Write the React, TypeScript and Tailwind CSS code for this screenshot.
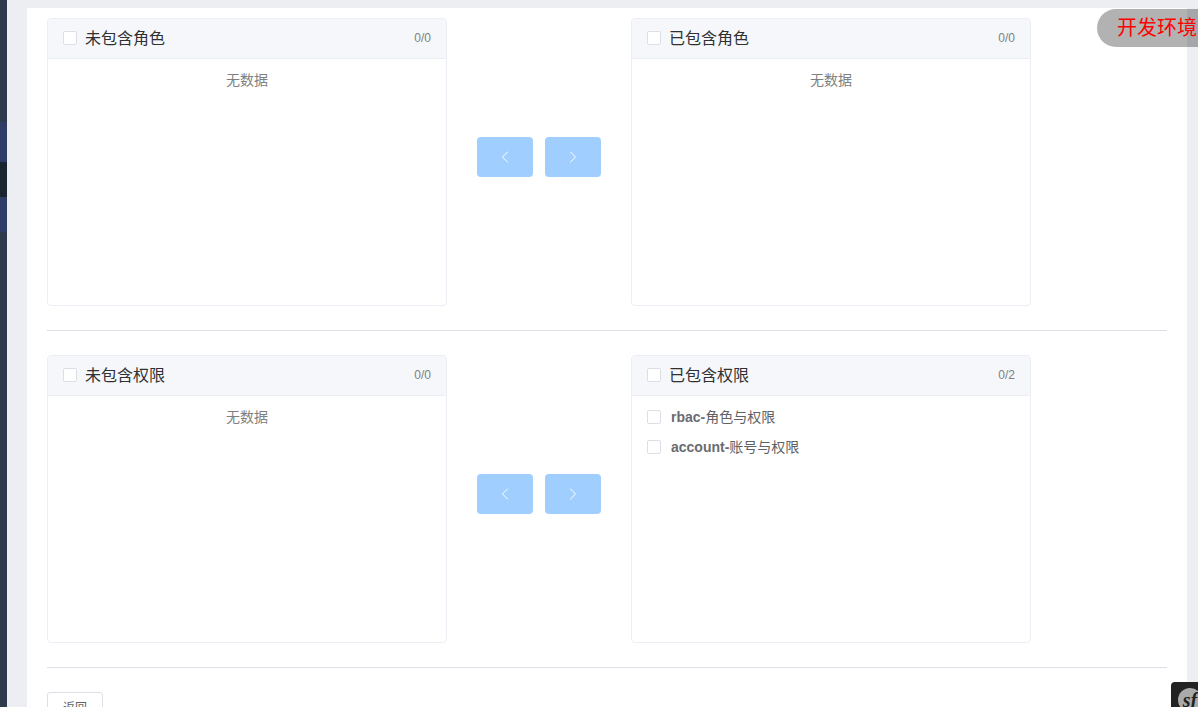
import { ChevronLeft, ChevronRight } from "lucide-react";

const FONT = "font-['Liberation_Sans','Noto_Sans_CJK_SC',sans-serif]";

type Item = { code: string; name: string };

function Checkbox() {
  return (
    <span className="inline-block h-3.5 w-3.5 shrink-0 rounded-[2px] border border-[#dcdfe6] bg-white" />
  );
}

function Panel({
  title,
  count,
  items = [],
}: {
  title: string;
  count: string;
  items?: Item[];
}) {
  return (
    <div className="h-[288px] w-[400px] shrink-0 overflow-hidden rounded-[4px] border border-[#ebeef5] bg-white">
      <div className="box-content -mt-px flex h-10 items-center border-b border-[#ebeef5] bg-[#f5f7fa] px-[15px]">
        <Checkbox />
        <span className="relative top-px ml-2 text-base text-[#303133]">{title}</span>
        <span className="ml-auto text-xs text-[#808080]">{count}</span>
      </div>
      {items.length === 0 ? (
        <p className="pt-[5px] text-center text-sm leading-[32px] text-[#808080]">无数据</p>
      ) : (
        <ul className="pt-1.5">
          {items.map((it) => (
            <li key={it.code} className="flex h-[30px] items-center pl-[15px] text-sm text-[#606266]">
              <Checkbox />
              <span className="ml-[10px]">
                <b className="font-bold text-[#6a6c70]">{it.code}-</b>
                {it.name}
              </span>
            </li>
          ))}
        </ul>
      )}
    </div>
  );
}

function Transfer(props: {
  left: string;
  right: string;
  rightCount?: string;
  items?: Item[];
}) {
  return (
    <div className="flex items-center">
      <Panel title={props.left} count="0/0" />
      <div className="mb-2.5 flex w-[184px] shrink-0 justify-center gap-3">
        <button className="flex h-10 w-14 items-center justify-center rounded-[4px] bg-[#a0cfff] text-white">
          <ChevronLeft size={20} strokeWidth={1.2} />
        </button>
        <button className="flex h-10 w-14 items-center justify-center rounded-[4px] bg-[#a0cfff] text-white">
          <ChevronRight size={20} strokeWidth={1.2} />
        </button>
      </div>
      <Panel title={props.right} count={props.rightCount ?? "0/0"} items={props.items} />
    </div>
  );
}

export default function App() {
  return (
    <div className={`${FONT} relative flex h-[707px] overflow-hidden bg-[#eceef2]`}>
      {/* sidebar, only a sliver is visible */}
      <div className="flex w-[7px] shrink-0 flex-col bg-[#2e3a4b]">
        <div className="mt-[122px] h-10 bg-[#2f3d66]" />
        <div className="h-[35px] bg-[#1b2530]" />
        <div className="h-[35px] bg-[#2f3d66]" />
      </div>

      <div className="ml-5 mt-2 w-[1160px] shrink-0 bg-white px-5 pt-2.5">
        <Transfer left="未包含角色" right="已包含角色" />
        <hr className="my-6 border-t border-[#dcdfe6]" />
        <Transfer
          left="未包含权限"
          right="已包含权限"
          rightCount="0/2"
          items={[
            { code: "rbac", name: "角色与权限" },
            { code: "account", name: "账号与权限" },
          ]}
        />
        <hr className="my-6 border-t border-[#dcdfe6]" />
        <button className="h-8 w-14 rounded-[3px] border border-[#dcdfe6] bg-white text-xs text-[#606266]">
          返回
        </button>
      </div>

      {/* env badge */}
      <div className="absolute right-0 top-[9px] flex h-[38px] w-[101px] items-center overflow-hidden whitespace-nowrap rounded-l-[19px] bg-black/30 pl-5 text-xl text-[#ff0000]">
        开发环境
      </div>

      {/* symfony toolbar toggle */}
      <div className="absolute bottom-0 right-0 flex h-[25px] w-[27px] items-start overflow-hidden rounded-tl-[4px] bg-[#222222] pl-[7px] pt-[6px]">
        <span className="flex h-6 w-6 shrink-0 items-center justify-center rounded-full bg-[#aaaaaa] font-['Liberation_Serif',serif] text-[20px] font-bold italic leading-none text-[#222222]">
          sf
        </span>
      </div>
    </div>
  );
}
